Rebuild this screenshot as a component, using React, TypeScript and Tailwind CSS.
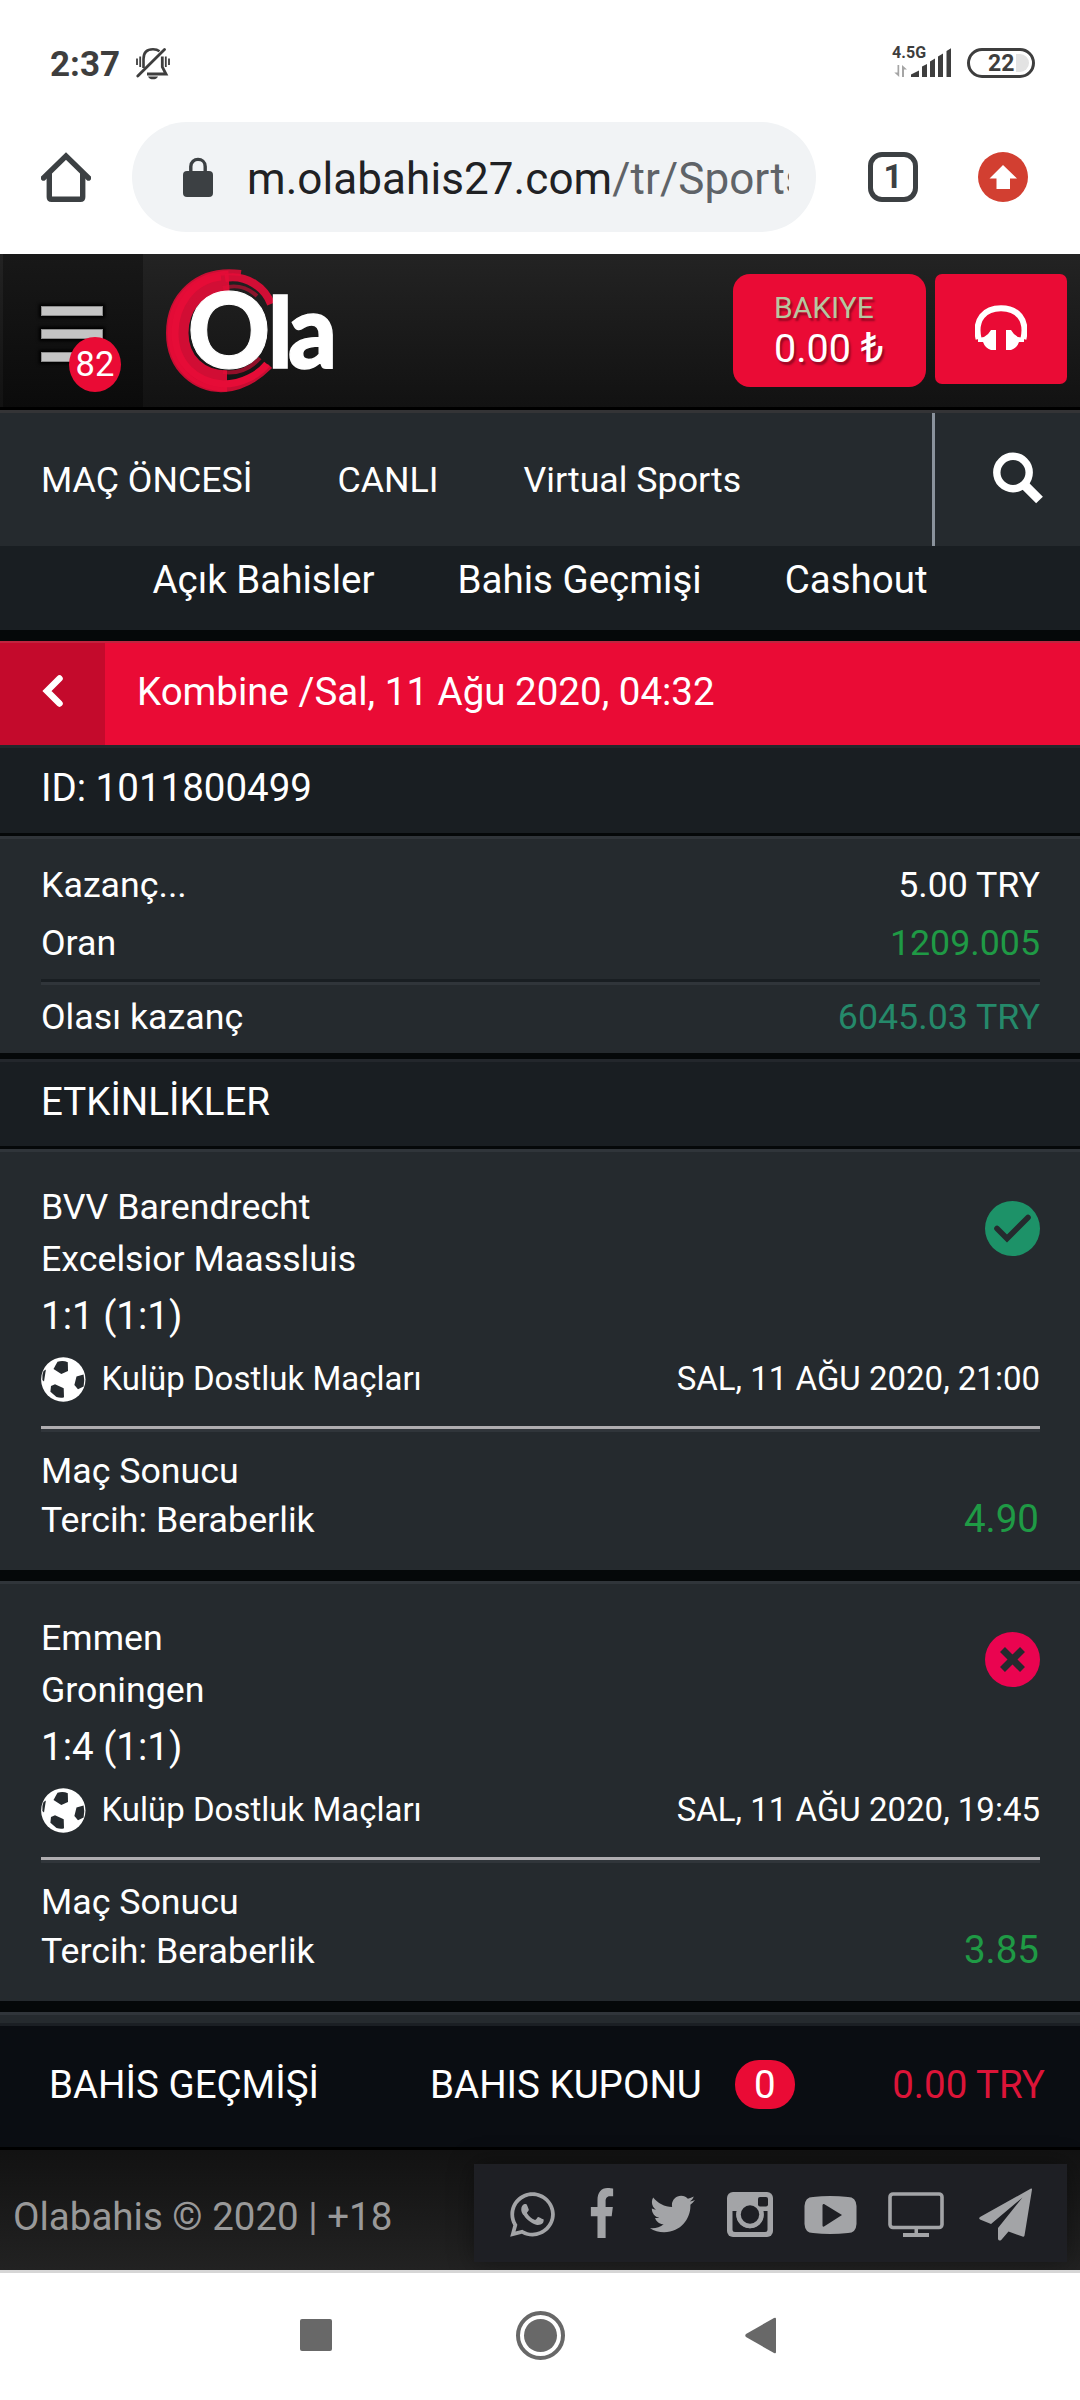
// App.tsx

import { FC } from 'react';
import { FaFacebookF, FaTwitter, FaWhatsapp } from 'react-icons/fa';

interface Match {
  home: string;
  away: string;
  score: string;
  league: string;
  date: string;
  market: string;
  pick: string;
  odds: string;
  won: boolean;
}

const matches: Match[] = [
  {
    home: 'BVV Barendrecht',
    away: 'Excelsior Maassluis',
    score: '1:1 (1:1)',
    league: 'Kulüp Dostluk Maçları',
    date: 'SAL, 11 AĞU 2020, 21:00',
    market: 'Maç Sonucu',
    pick: 'Tercih: Beraberlik',
    odds: '4.90',
    won: true,
  },
  {
    home: 'Emmen',
    away: 'Groningen',
    score: '1:4 (1:1)',
    league: 'Kulüp Dostluk Maçları',
    date: 'SAL, 11 AĞU 2020, 19:45',
    market: 'Maç Sonucu',
    pick: 'Tercih: Beraberlik',
    odds: '3.85',
    won: false,
  },
];

const StatusBar: FC = () => (
  <div className="flex h-[122px] items-start justify-between pr-[45px] pl-[50px] text-[#3e3e3e]">
    <div className="mt-[45px] flex items-center">
      <span className="text-[35px] leading-[40px] font-bold">2:37</span>
      <svg className="mb-[2px] ml-[16px] h-[34px] w-[34px]" viewBox="0 0 34 34" fill="none" stroke="currentColor">
        <path d="M7.5 21 V12 C7.5 5 11 2.2 17 2.2 C20 2.2 22 3 23.5 4.2" strokeWidth="2.6" />
        <path d="M26.3 9.5 V20 L30 27 H11" strokeWidth="2.8" />
        <path d="M1.8 29 L28.5 2.5" strokeWidth="2.8" strokeLinecap="round" />
        <path d="M1 11.5 V18 M4.2 9.5 V20 M29.8 9.5 V20 M33 11.5 V18" strokeWidth="1.8" />
        <path d="M12 29.5 H22 C20.5 33.3 13.5 33.3 12 29.5 Z" fill="currentColor" stroke="none" />
      </svg>
    </div>
    <div className="mt-[46px] flex">
      <div className="relative w-[60px]">
        <span className="absolute top-[-2px] left-0 text-[16px] leading-[18px] font-bold tracking-[0.1px]">4.5G</span>
        <svg className="h-[32px] w-[62px]" viewBox="0 0 62 32" fill="currentColor">
          <path d="M19 31 V28.5 L27 24.5 V31 Z M30 31 V20.5 L35 18 V31 Z M38 31 V15.5 L43 12.5 V31 Z M46 31 V10.5 L51 7.5 V31 Z M54.5 31 V5 L59 2.2 V31 Z" />
          <path d="M5.5 19 H7.2 V31 L2.3 26.5 H5.5 Z M10 31 V19 L15 23.5 H12 V31 Z" fill="#a5a5a5" />
        </svg>
      </div>
      <div className="mt-[2px] ml-[15px] flex h-[30px] w-[68px] items-center rounded-full border-[3px] border-[#3e3e3e] pl-[18px]">
        <span className="mt-[1px] text-[23px] leading-[24px] font-bold">22</span>
        <span className="ml-[2px] h-[18px] w-[13px] rounded-r-full bg-[#e3e3e3]" />
      </div>
    </div>
  </div>
);

const AddressBar: FC = () => (
  <div className="flex h-[132px] items-start">
    <svg className="mt-[30px] ml-[41px] h-[50px] w-[50px]" viewBox="0 0 50 50" fill="none" stroke="#3c4043" strokeWidth="5.4">
      <path d="M2.5 26 L25 4 L47.5 26" strokeLinecap="round" />
      <path d="M8.3 20 V45 Q8.3 47.3 10.6 47.3 H39.4 Q41.7 47.3 41.7 45 V20" />
    </svg>
    <div className="ml-[41px] flex h-[110px] w-[684px] items-center rounded-full bg-[#f1f3f5]">
      <svg className="mb-[1px] ml-[51px] h-[40px] w-[30px]" viewBox="0 0 30 40">
        <rect y="14" width="30" height="26" rx="4" fill="#3c4043" />
        <path d="M7.8 15 V9.5 C7.8 0 22.2 0 22.2 9.5 V15" fill="none" stroke="#3c4043" strokeWidth="3.4" />
      </svg>
      {/* long addresses are clipped by the pill */}
      <div className="mt-[3px] ml-[34px] w-[542px] overflow-hidden text-[44px] leading-[60px] tracking-[0.08px] whitespace-nowrap text-[#202124]">
        m.olabahis27.com<span className="text-[#5f6368]">/tr/Sports</span>
      </div>
    </div>
    <div className="mt-[30px] ml-[52px] flex h-[50px] w-[50px] items-center justify-center rounded-[14px] border-[5.5px] border-[#3c4043] text-[33px] leading-[36px] font-bold text-[#3c4043]">
      1
    </div>
    <svg className="mt-[30px] ml-[60px] h-[50px] w-[50px]" viewBox="0 0 50 50">
      <circle cx="25" cy="25" r="25" fill="#d23f31" />
      <path d="M25 13 L39 26.5 H32 V37 H18.5 V26.5 H11.5 Z" fill="#fff" />
    </svg>
  </div>
);

const Logo: FC = () => (
  <svg className="mt-[12px] ml-[20px] h-[132px] w-[180px] overflow-visible" viewBox="0 0 180 132">
    <g fill="none" stroke="#e60c37">
      {/* solid brush base, with lighter strokes swept over it */}
      <path d="M66 15 C32 17 15 40 15 67 C15 96 36 115 64 115" strokeWidth="21" opacity="0.9" />
      <path d="M78 7 C34 1 6 30 6 67 C6 104 34 125 62 123 C82 121 97 110 107 100" strokeWidth="6" opacity="0.85" />
      <path d="M58 11 C29 14 12 40 12 67 C12 98 34 116 60 118 C80 118 96 108 104 98" strokeWidth="7" />
      <path d="M60 106 C76 108 88 102 97 92" strokeWidth="4" opacity="0.6" />
      <path d="M62 12 C84 8 102 22 108 38" strokeWidth="8" opacity="0.9" />
      <path d="M60 22 C74 18 84 21 94 30" strokeWidth="4" opacity="0.55" />
    </g>
    <g fill="#fff" stroke="#fff" fontFamily="Lato" fontWeight="900">
      <text x="24.5" y="102" fontSize="105" textLength="83" lengthAdjust="spacingAndGlyphs" strokeWidth="1">O</text>
      <text x="105" y="102" fontSize="97" strokeWidth="1.5">l</text>
      <text x="125" y="102" fontSize="102" textLength="49" lengthAdjust="spacingAndGlyphs" strokeWidth="1.5">a</text>
    </g>
  </svg>
);

const Header: FC = () => (
  <header className="flex h-[156px] items-start border-b-[3px] border-black bg-gradient-to-b from-[#232323] to-[#121212]">
    <div className="relative ml-[3px] h-full w-[140px] bg-gradient-to-b from-[#181818] to-[#0b0b0b] pt-[52px] pl-[38px]">
      <div className="flex w-[62px] flex-col gap-[13px]">
        <span className="h-[10px] border border-[#8c8c8c] bg-[#c4c4c4] shadow-[0_0_3px_2px_#000]" />
        <span className="h-[10px] border border-[#8c8c8c] bg-[#c4c4c4] shadow-[0_0_3px_2px_#000]" />
        <span className="h-[10px] border border-[#8c8c8c] bg-[#c4c4c4] shadow-[0_0_3px_2px_#000]" />
      </div>
      <span className="absolute top-[83px] left-[66px] flex h-[55px] w-[52px] items-center justify-center rounded-[50%] bg-[#ea0b35] pb-[1px] text-[34.5px] leading-[40px] text-white">
        82
      </span>
    </div>
    <Logo />
    <div className="mt-[20px] ml-auto h-[113px] w-[193px] rounded-[17px] bg-[#ea0b35] pt-[16px] pl-[41px] [text-shadow:2px_3px_2px_rgba(0,0,0,0.35)]">
      <div className="text-[30px] leading-[36px] text-[#b5c7a0]">BAKIYE</div>
      <div className="text-[39.5px] leading-[44px] whitespace-nowrap text-white">
        0.00 <span className="text-[42px]">₺</span>
      </div>
    </div>
    <div className="mt-[20px] mr-[13px] ml-[9px] flex h-[110px] w-[132px] items-center justify-center rounded-[7px] bg-[#ea0b35]">
      <svg className="mb-[2px] h-[46px] w-[52px]" viewBox="0 0 52 46">
        <path d="M3.6 34 C-1 14 10 3.3 26 3.3 C42 3.3 53 14 48.4 34" fill="none" stroke="#fff" strokeWidth="6" />
        <path d="M21 25 V45 H16 Q10 43 8 37 H3 V33 L9 32 Q14 29 16 25 Z M31 25 V45 H36 Q42 43 44 37 H49 V33 L43 32 Q38 29 36 25 Z" fill="#fff" />
      </svg>
    </div>
  </header>
);

const MainNav: FC = () => (
  <nav className="flex h-[136px] border-t-[3px] border-[#343436] bg-[#252a2e] text-[35.75px] leading-[40px] text-white">
    <div className="flex flex-1 items-center gap-[85px] pl-[41px]">
      <span>MAÇ ÖNCESİ</span>
      <span>CANLI</span>
      <span>Virtual Sports</span>
    </div>
    <div className="w-[148px] border-l-[3px] border-[#8a929c] pt-[39px] pl-[58px]">
      <svg className="h-[52px] w-[50px]" viewBox="0 0 50 52" fill="none" stroke="#fff">
        <circle cx="20" cy="20.5" r="16.2" strokeWidth="7.4" />
        <path d="M31 32.5 L46.5 48" strokeWidth="9.5" />
      </svg>
    </div>
  </nav>
);

const SubNav: FC = () => (
  <nav className="flex h-[95px] justify-center gap-[83px] border-b-[11px] border-[#050809] bg-[#191e22] pt-[10px] text-[38.5px] leading-[48px] text-white">
    <span>Açık Bahisler</span>
    <span>Bahis Geçmişi</span>
    <span>Cashout</span>
  </nav>
);

const TicketSummary: FC = () => (
  <section className="text-white">
    <div className="flex h-[104px] items-center border-t-[2px] border-[#c0243f] bg-[#ea0b35] text-[38.5px] leading-[46px]">
      <div className="flex h-full w-[105px] items-center justify-center bg-[#c40a2c]">
        <svg className="mb-[6px] h-[34px] w-[22px]" viewBox="0 0 22 34" fill="none">
          <path d="M17.5 4.5 L5 17 L17.5 29.5" stroke="#fff" strokeWidth="6.5" strokeLinecap="round" />
        </svg>
      </div>
      <span className="mb-[5px] pl-[32px]">Kombine /Sal, 11 Ağu 2020, 04:32</span>
    </div>
    <div className="h-[91px] border-t-[3px] border-b-[3px] border-t-[#23272c] border-b-[#050809] bg-[#191e22] pt-[17px] pl-[41px] text-[38.5px] leading-[46px]">
      ID: 1011800499
    </div>
    <div className="h-[223px] border-t-[3px] border-b-[6px] border-t-[#30353a] border-b-[#050809] bg-[#252a2e] pr-[40px] pl-[41px] text-[35.75px] leading-[58px]">
      <div className="flex justify-between pt-[17px]">
        <span>Kazanç...</span>
        <span>5.00 TRY</span>
      </div>
      <div className="flex justify-between">
        <span>Oran</span>
        <span className="text-[#1f9a45]">1209.005</span>
      </div>
      <div className="mt-[7px] h-[6px] border-t-[3px] border-[#191e22] bg-[#30353a]" />
      <div className="flex justify-between pt-[3px]">
        <span>Olası kazanç</span>
        <span className="text-[#25896a]">6045.03 TRY</span>
      </div>
    </div>
    <div className="h-[90px] border-t-[3px] border-b-[3px] border-t-[#23272c] border-b-[#050809] bg-[#191e22] pt-[17px] pl-[41px] text-[38.5px] leading-[46px]">
      ETKİNLİKLER
    </div>
  </section>
);

const BallIcon: FC = () => (
  <svg className="h-[45px] w-[45px]" viewBox="0 0 45 45">
    <circle cx="22.3" cy="22.5" r="22.2" fill="#fff" />
    <g fill="#252a2e">
      <path d="M16.5 4.7 Q22 3 26.8 5.2 L27 14 L20.3 17 L12.5 12 Z" />
      <path d="M42.6 17.5 Q44 23 42.6 29.5 L37 32.3 L33.4 28 L35.5 19.5 Z" />
      <path d="M14 27.2 L22.7 31.3 L23 40.3 Q20 41.5 15.5 40 L9.4 34.7 L10 29 Z" />
      <path d="M2.5 14 L4.9 12.5 L3 24.5 L1.4 23 Q0.8 18 2.5 14 Z" />
    </g>
  </svg>
);

const MatchCard: FC<{ match: Match }> = ({ match }) => (
  <article className="h-[431px] border-t-[3px] border-b-[11px] border-t-[#30353a] border-b-[#050809] bg-[#252a2e] pr-[40px] pl-[41px] text-white first-of-type:h-[432px] first-of-type:pt-[1px]">
    <div className="flex justify-between pt-[28px]">
      <div className="text-[35.75px] leading-[52px]">
        <div>{match.home}</div>
        <div>{match.away}</div>
        <div className="mt-[4px] text-[38.5px] leading-[54px]">{match.score}</div>
      </div>
      <svg className="mt-[20px] h-[55px] w-[55px]" viewBox="0 0 55 55" fill="none" stroke="#252a2e">
        <circle cx="27.5" cy="27.5" r="27.5" fill={match.won ? '#1d9268' : '#ea0450'} stroke="none" />
        {match.won ? (
          <path d="M12 27.5 L22 37.5 L43 16.5" strokeWidth="5.6" strokeLinecap="round" />
        ) : (
          <path d="M17.5 17.5 L37.5 37.5 M37.5 17.5 L17.5 37.5" strokeWidth="7" />
        )}
      </svg>
    </div>
    <div className="mt-[11px] flex h-[50px] items-center text-[33px] leading-[40px]">
      <BallIcon />
      <span className="mb-[1px] ml-[15.5px]">{match.league}</span>
      <span className="mb-[1px] ml-auto">{match.date}</span>
    </div>
    <div className="mt-[22px] h-[6px] border-t-[3px] border-[#afadb0] bg-[#30353a]" />
    <div className="flex items-end justify-between pt-[15px]">
      <div className="text-[35.75px] leading-[49px]">
        <div>{match.market}</div>
        <div>{match.pick}</div>
      </div>
      <span className="mr-[1px] text-[38.5px] leading-[52px] text-[#1f9a45]">{match.odds}</span>
    </div>
  </article>
);

const CouponBar: FC = () => (
  <div className="flex h-[127px] items-center border-t-[3px] border-b-[3px] border-t-[#1b1f24] border-b-black bg-[#0a0d12] pr-[35px] pb-[4px] pl-[49px] text-[38.5px] leading-[46px] text-white">
    <span>BAHİS GEÇMİŞİ</span>
    <span className="ml-[111px]">BAHIS KUPONU</span>
    <span className="ml-[33px] flex h-[49px] w-[60px] items-center justify-center rounded-[24px] bg-[#ea0b35]">0</span>
    <span className="ml-auto text-[#dc1438]">0.00 TRY</span>
  </div>
);

const Footer: FC = () => (
  <footer className="flex h-[120px] items-start justify-between bg-gradient-to-b from-[#121212] to-[#222] pr-[13px] pl-[13px]">
    <span className="mt-[44px] text-[38.5px] leading-[46px] text-[#999]">Olabahis © 2020 | +18</span>
    <div className="mt-[14px] flex h-[98px] w-[593px] items-center bg-[#1e1f24] pr-[35px] pl-[36px] text-[#a3a4a7] shadow-[0_0_24px_rgba(0,0,0,0.4)]">
      <FaWhatsapp className="mb-[-3px] h-[51px] w-[45px]" />
      <FaFacebookF className="ml-[34px] h-[50px] w-[26px]" preserveAspectRatio="none" />
      <FaTwitter className="mb-[-2px] ml-[35px] h-[46px] w-[45px]" />
      <svg className="mb-[-3px] ml-[32px] h-[45px] w-[46px]" viewBox="0 0 46 45">
        <rect width="46" height="45" rx="6" fill="currentColor" />
        <path d="M5.5 19 H10 A13.5 13.5 0 1 0 36 19 H40.5 V37.5 Q40.5 40 38 40 H8 Q5.5 40 5.5 37.5 Z" fill="#1e1f24" />
        <circle cx="23" cy="22.5" r="13.8" fill="currentColor" />
        <circle cx="23" cy="22.5" r="9.2" fill="#1e1f24" />
        <rect x="31" y="5" width="10" height="9.5" rx="2" fill="#1e1f24" />
      </svg>
      <svg className="mb-[-3px] ml-[31px] h-[38px] w-[53px]" viewBox="0 0 53 38">
        <path d="M9 1 Q26 -1 44 1 Q52 1 52.5 10 V28 Q52 37 44 37 Q26 39 9 37 Q1 37 .5 28 V10 Q1 1 9 1 Z" fill="currentColor" />
        <path d="M20 8 L38 19 L20 30.5 Q18.5 31 18.5 29.5 V9.5 Q18.5 7.5 20 8 Z" fill="#1e1f24" />
      </svg>
      <svg className="mb-[-3px] ml-[31px] h-[45px] w-[56px]" viewBox="0 0 56 45">
        <rect x="2" y="2" width="52" height="33.5" rx="3" fill="none" stroke="currentColor" strokeWidth="3.6" />
        <path d="M26.5 36 H30 V41 H41 V45 H15 V41 H26.5 Z" fill="currentColor" />
      </svg>
      <svg className="mb-[-3px] ml-[35px] h-[53px] w-[53px]" viewBox="0 0 53 53" fill="currentColor">
        <path d="M52 .5 Q53 0 53 1.5 L45.5 47.5 Q45 49.3 43.5 48.6 L29.5 43.5 L22 52.2 Q19 53.5 19 50.5 V40 L43.5 9.5 L12 36 L1 31.5 Q-.7 30.3 1 29 Z" />
      </svg>
    </div>
  </footer>
);

const SystemNav: FC = () => (
  <div className="flex h-[130px] items-center border-t-[3px] border-[#d6d6d6] bg-white pl-[300px]">
    <span className="mt-[-3px] h-[32px] w-[32px] rounded-[2px] bg-[#686868]" />
    <svg className="mt-[-3px] ml-[184px] h-[49px] w-[49px]" viewBox="0 0 49 49">
      <circle cx="24.5" cy="24.5" r="22.5" fill="none" stroke="#686868" strokeWidth="4" />
      <circle cx="24.5" cy="24.5" r="16.5" fill="#686868" />
    </svg>
    <svg className="mt-[-3px] ml-[180px] h-[37px] w-[31px]" viewBox="0 0 31 37">
      <path d="M29 1 Q31 0 31 2 V35 Q31 37 29 36 L1 20 Q-.5 18.5 1 17 Z" fill="#686868" />
    </svg>
  </div>
);

const App: FC = () => {
  return (
    <div className="flex h-[2400px] w-[1080px] flex-col overflow-hidden bg-white font-['Roboto',sans-serif] *:shrink-0">
      <StatusBar />
      <AddressBar />
      <Header />
      <MainNav />
      <SubNav />
      <TicketSummary />
      {matches.map((match) => (
        <MatchCard key={match.home} match={match} />
      ))}
      {/* top edge of the next event, cut off by the coupon bar */}
      <div className="h-[11px] border-t-[3px] border-[#30353a] bg-[#252a2e]" />
      <CouponBar />
      <Footer />
      <SystemNav />
    </div>
  );
};

export default App;
